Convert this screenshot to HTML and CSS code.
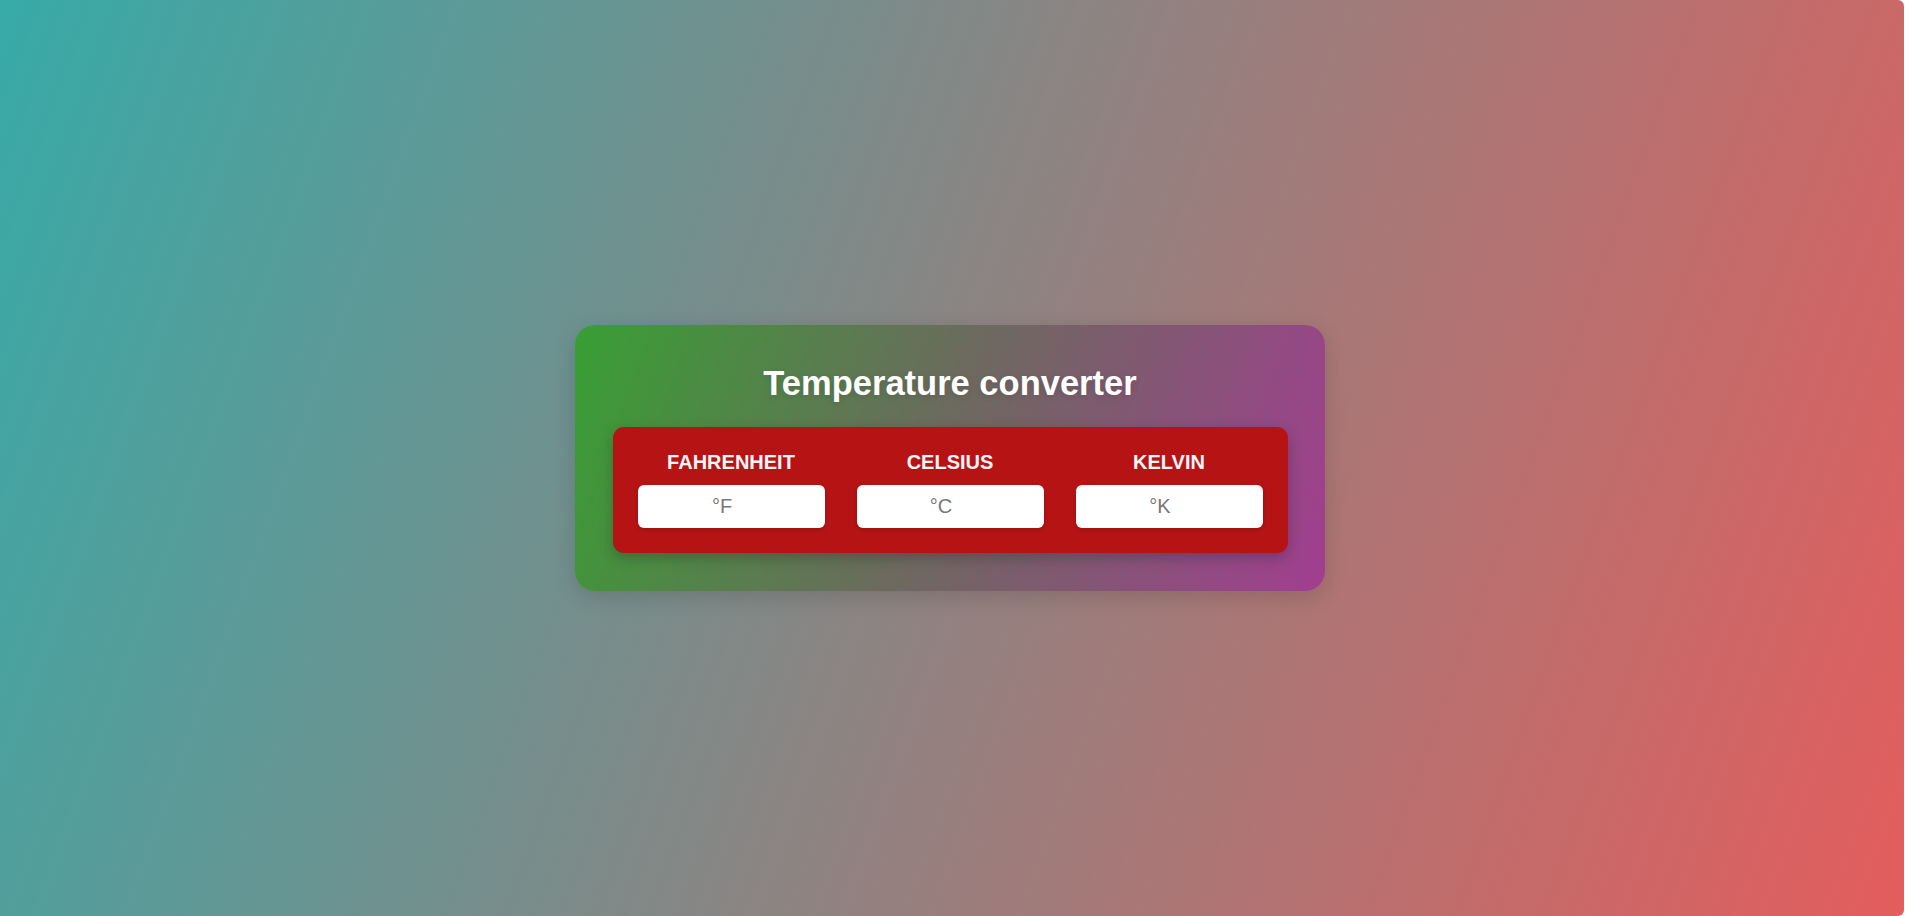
FILE: index.html
```html
<!DOCTYPE html>
<html lang="en">
<head>
<meta charset="utf-8">
<title>Temperature converter</title>
<link rel="stylesheet" href="styles.css">
</head>
<body>
<div class="page">
  <main class="card">
    <h1 class="title">Temperature converter</h1>
    <div class="panel">
      <div class="field">
        <label class="label" for="f">FAHRENHEIT</label>
        <input class="input" id="f" type="text" placeholder="°F">
      </div>
      <div class="field">
        <label class="label" for="c">CELSIUS</label>
        <input class="input" id="c" type="text" placeholder="°C">
      </div>
      <div class="field">
        <label class="label" for="k">KELVIN</label>
        <input class="input" id="k" type="text" placeholder="°K">
      </div>
    </div>
  </main>
</div>
</body>
</html>
```

FILE: styles.css
```css
html, body {
  margin: 0;
  padding: 0;
  height: 100%;
  background: #ffffff;
}

body {
  font-family: "Liberation Sans", Arial, sans-serif;
  overflow: hidden;
}

.page {
  width: 1904px;
  height: 100vh;
  box-sizing: border-box;
  padding-right: 4px;
  border-radius: 0 6px 6px 0;
  background: linear-gradient(110deg, #37aaa7 0%, #e45d5d 100%);
  display: flex;
  align-items: center;
  justify-content: center;
}

.card {
  width: 750px;
  box-sizing: border-box;
  padding: 38px 0;
  border-radius: 20px;
  background: linear-gradient(110deg, #389f33 0%, #6c6a5e 48%, #a13e90 100%);
  box-shadow: 0 6px 22px rgba(0, 0, 0, 0.14);
}

.title {
  margin: 0 0 24px;
  font-size: 34.5px;
  line-height: 40px;
  font-weight: 700;
  color: #ffffff;
  text-align: center;
  text-shadow: 0 2px 6px rgba(0, 0, 0, 0.12);
}

.panel {
  width: 90%;
  margin: 0 auto;
  box-sizing: border-box;
  padding: 24px 25px 25px;
  border-radius: 11px;
  background: #b61414;
  box-shadow: 0 5px 14px rgba(0, 0, 0, 0.22);
  display: flex;
  justify-content: space-between;
}

.field {
  width: 187px;
  display: flex;
  flex-direction: column;
  align-items: center;
  gap: 11px;
}

.label {
  font-size: 20px;
  line-height: 23px;
  font-weight: 700;
  color: #fbf4f8;
}

.input {
  width: 187px;
  height: 43px;
  box-sizing: border-box;
  border: none;
  border-radius: 6px;
  background: #ffffff;
  box-shadow: 0 2px 4px rgba(0, 0, 0, 0.16);
  font-family: "Liberation Sans", Arial, sans-serif;
  font-size: 20px;
  text-align: center;
  color: #333333;
  outline: none;
  padding: 0 19px 0 1px;
}

.input::placeholder {
  color: #777777;
}
```
